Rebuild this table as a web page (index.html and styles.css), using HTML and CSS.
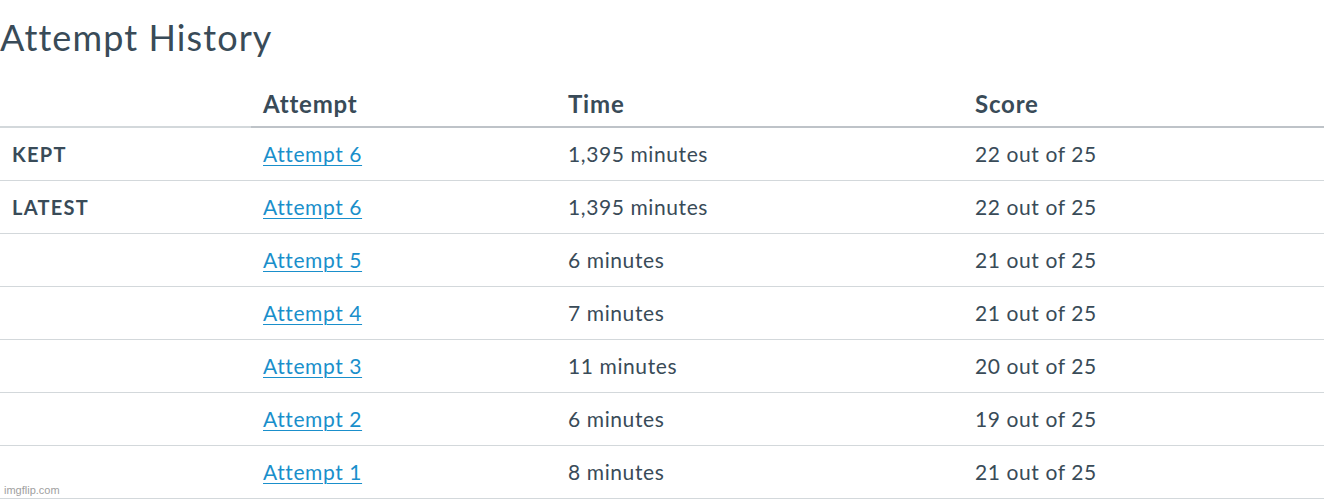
FILE: index.html
```html
<!DOCTYPE html>
<html>
<head>
<meta charset="utf-8">
<link rel="stylesheet" href="styles.css">
</head>
<body>
<div class="page">
  <h1 class="title">Attempt History</h1>
  <table class="history">
    <thead>
      <tr>
        <th class="c-label"></th>
        <th class="c-attempt">Attempt</th>
        <th class="c-time">Time</th>
        <th class="c-score">Score</th>
      </tr>
    </thead>
    <tbody>
      <tr><td class="label">KEPT</td><td><a href="#">Attempt 6</a></td><td>1,395 minutes</td><td>22 out of 25</td></tr>
      <tr><td class="label">LATEST</td><td><a href="#">Attempt 6</a></td><td>1,395 minutes</td><td>22 out of 25</td></tr>
      <tr><td class="label"></td><td><a href="#">Attempt 5</a></td><td>6 minutes</td><td>21 out of 25</td></tr>
      <tr><td class="label"></td><td><a href="#">Attempt 4</a></td><td>7 minutes</td><td>21 out of 25</td></tr>
      <tr><td class="label"></td><td><a href="#">Attempt 3</a></td><td>11 minutes</td><td>20 out of 25</td></tr>
      <tr><td class="label"></td><td><a href="#">Attempt 2</a></td><td>6 minutes</td><td>19 out of 25</td></tr>
      <tr><td class="label"></td><td><a href="#">Attempt 1</a></td><td>8 minutes</td><td>21 out of 25</td></tr>
    </tbody>
  </table>
  <div class="watermark">imgflip.com</div>
</div>
</body>
</html>
```
FILE: styles.css
```css
html, body {
  margin: 0;
  padding: 0;
  background: #fff;
}
body {
  font-family: Lato, "Noto Sans", sans-serif;
  color: #2d3b45;
}
.page {
  position: relative;
  width: 1324px;
  height: 500px;
  overflow: hidden;
}
.title {
  margin: 0;
  padding: 14px 0 0 0;
  font-size: 36px;
  font-weight: 400;
  letter-spacing: 1.1px;
  line-height: 46px;
  height: 66px;
  color: #394b58;
}
.history {
  width: 1324px;
  border-collapse: collapse;
  table-layout: fixed;
}
.history th,
.history td {
  box-sizing: border-box;
}
.c-label { width: 251px; }
.c-attempt { width: 305px; }
.c-time { width: 407px; }
.history th {
  text-align: left;
  font-size: 24px;
  font-weight: 700;
  letter-spacing: 0.8px;
  padding: 0 12px;
  height: 47px;
  vertical-align: middle;
  border-bottom: 2px solid #bec3c8;
  color: #394b58;
}
.history th.c-label {
  border-bottom-color: #d3d8db;
}
.history td {
  font-size: 21px;
  letter-spacing: 0.6px;
  padding: 0 12px;
  height: 53px;
  vertical-align: middle;
  border-bottom: 1px solid #d3d8db;
  color: #394b58;
}
.history td.label {
  font-size: 20px;
  font-weight: 700;
  letter-spacing: 1.3px;
}
.history a {
  color: #1a8fcb;
  text-decoration: underline;
  text-underline-offset: 3px;
  text-decoration-thickness: 1px;
}
.watermark {
  position: absolute;
  left: 4px;
  bottom: 4px;
  font-family: "Liberation Sans", Arial, sans-serif;
  font-size: 11px;
  color: #a0a0a0;
}
```
